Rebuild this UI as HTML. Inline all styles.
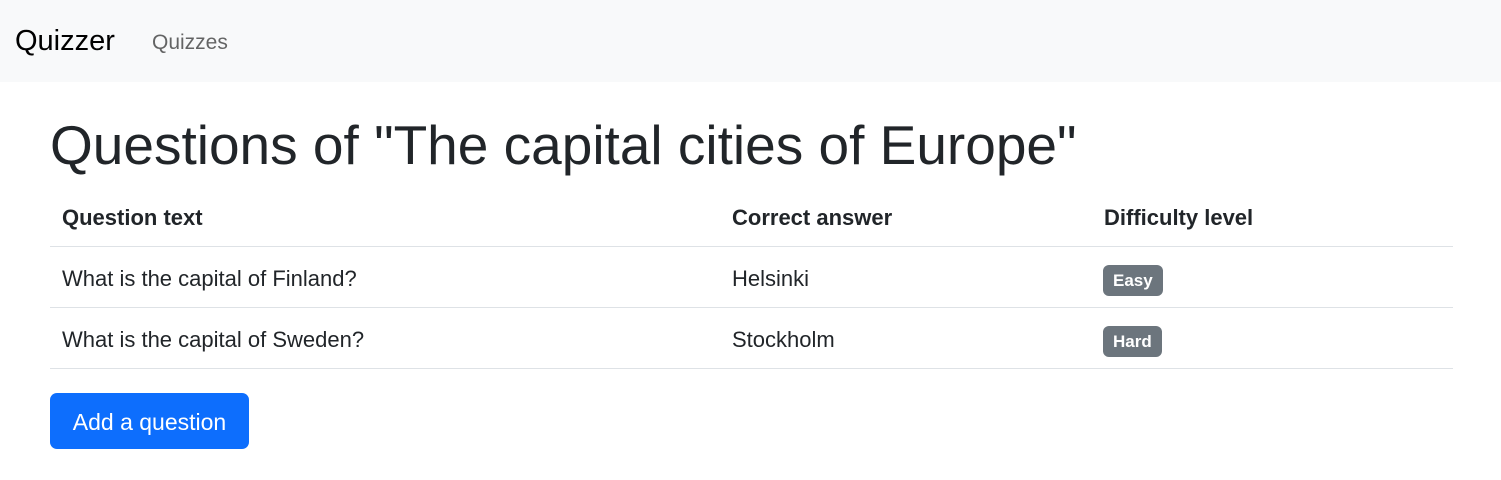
<!DOCTYPE html>
<html><head><meta charset="utf-8"><style>
*{box-sizing:border-box;margin:0;padding:0}
body{width:1501px;height:480px;background:#fff;font-family:"Liberation Sans",sans-serif;color:#212529;overflow:hidden}
.nav{height:82px;background:#f8f9fa;position:relative}
.brand{position:absolute;left:15px;top:25px;font-size:29px;color:#000}
.link{position:absolute;left:152px;top:31px;font-size:21px;color:rgba(0,0,0,.6)}
h1{position:absolute;left:50px;top:113px;font-size:55px;font-weight:400;white-space:nowrap}
table{position:absolute;left:50px;top:186px;width:1403px;border-collapse:collapse;font-size:22px}
td,th{text-align:left;padding:4px 12px 0;height:61px;border-bottom:1px solid #dee2e6;vertical-align:middle}
th{font-weight:700}
tr.h th{height:60px}
.c1{width:670px}.c2{width:372px}
.badge{display:inline-block;position:relative;top:2px;background:#6c757d;color:#fff;font-weight:700;font-size:17px;padding:6px 10px 5px;border-radius:6px;margin-left:-1px}
.btn{position:absolute;left:50px;top:393px;width:199px;height:56px;background:#0d6efd;color:#fff;border-radius:7px;font-size:23px;line-height:58px;text-align:center}
</style></head><body>
<div class="nav"><span class="brand">Quizzer</span><span class="link">Quizzes</span></div>
<h1>Questions of "The capital cities of Europe"</h1>
<table>
<tr class="h"><th class="c1">Question text</th><th class="c2">Correct answer</th><th>Difficulty level</th></tr>
<tr><td>What is the capital of Finland?</td><td>Helsinki</td><td><span class="badge">Easy</span></td></tr>
<tr><td>What is the capital of Sweden?</td><td>Stockholm</td><td><span class="badge">Hard</span></td></tr>
</table>
<div class="btn">Add a question</div>
</body></html>
